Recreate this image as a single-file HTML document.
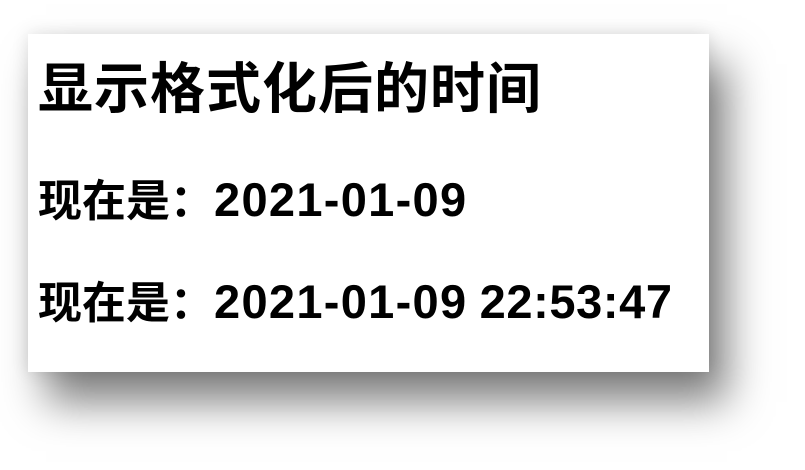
<!DOCTYPE html>
<html><head><meta charset="utf-8"><style>
html,body{margin:0;padding:0;width:805px;height:470px;background:#fff;overflow:hidden}
.card{position:absolute;left:28px;top:34px;width:681px;height:338px;background:#fff;box-shadow:18px 30px 40px rgba(0,0,0,0.5),0 0 16px rgba(0,0,0,0.12)}
.t{position:absolute;left:10px;white-space:nowrap;font-family:"Liberation Sans","Noto Sans CJK SC",sans-serif;font-weight:bold;color:#000}
.h{top:20px;font-size:55px;line-height:70px;letter-spacing:1px}
.l1{top:136px;font-size:44px;line-height:60px}
.l2{top:238px;font-size:44px;line-height:60px}
.d{font-size:47px;letter-spacing:1.3px}
.s{letter-spacing:0.6px}
</style></head><body>
<div class="card">
<div class="t h">显示格式化后的时间</div>
<div class="t l1">现在是：<span class="d">2021-01-09</span></div>
<div class="t l2">现在是：<span class="d">2021-01-09</span> <span class="d s">22:53:47</span></div>
</div>
</body></html>
